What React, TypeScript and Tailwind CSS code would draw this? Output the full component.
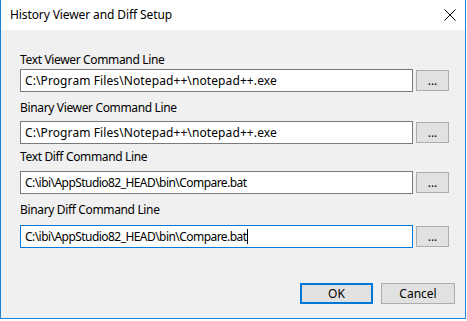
import React from "react";

const font = { fontFamily: '"Noto Sans", "Open Sans", sans-serif' };

function Row({
  label,
  value,
  labelClass,
  inputClass,
  valueClass,
  focused,
}: {
  label: string;
  value: string;
  labelClass: string;
  inputClass: string;
  valueClass: string;
  focused?: boolean;
}) {
  return (
    <>
      <div className={`h-[16px] leading-[16px] text-[12px] tracking-[-0.35px] text-black ${labelClass}`}>{label}</div>
      <div className={`flex items-center gap-[3px] ${inputClass}`}>
        <div
          className={`w-[393px] h-[23px] bg-white border flex items-center pl-[4px] text-[12px] text-black whitespace-nowrap ${
            focused ? "border-[#0078d7]" : "border-[#7a7a7a]"
          }`}
        >
          <span className={valueClass}>{value}</span>
          {focused && <span className="inline-block w-px h-[15px] bg-black" />}
        </div>
        <div className="w-[33px] h-[21px] bg-[#e1e1e1] border border-[#adadad] flex items-center justify-center text-[12px] leading-none text-black">
          ...
        </div>
      </div>
    </>
  );
}

export default function App() {
  return (
    <div className="w-[467px] h-[321px] bg-white" style={font}>
      <div className="w-[466px] h-[319px] border-l border-r border-b border-[#1883d7] flex flex-col">
        <div className="h-[30px] bg-white flex items-center justify-between pl-[9px] pr-[8px]">
          <span className="text-[12px] tracking-[-0.1px] text-black">History Viewer and Diff Setup</span>
          <svg width="12" height="12" viewBox="0 0 12 12" className="mr-[1px]">
            <path d="M0.5 0.5 L11.5 11.5 M11.5 0.5 L0.5 11.5" stroke="#000" strokeWidth="1" fill="none" />
          </svg>
        </div>
        <div className="flex-1 bg-[#f0f0f0] flex flex-col pl-[19px]">
          <Row
            label="Text Viewer Command Line"
            value="C:\Program Files\Notepad++\notepad++.exe"
            labelClass="mt-[22px]"
            inputClass="mt-[1px]"
            valueClass="tracking-[0.1px]"
          />
          <Row
            label="Binary Viewer Command Line"
            value="C:\Program Files\Notepad++\notepad++.exe"
            labelClass="mt-[8px]"
            inputClass="mt-[5px]"
            valueClass="tracking-[0.1px]"
          />
          <Row
            label="Text Diff Command Line"
            value="C:\ibi\AppStudio82_HEAD\bin\Compare.bat"
            labelClass="mt-[5px]"
            inputClass="mt-[6px]"
            valueClass="tracking-[-0.55px]"
          />
          <Row
            label="Binary Diff Command Line"
            value="C:\ibi\AppStudio82_HEAD\bin\Compare.bat"
            labelClass="mt-[8px]"
            inputClass="mt-[7px]"
            valueClass="tracking-[-0.55px]"
            focused
          />
          <div className="mt-auto mb-[14px] flex justify-end gap-[8px] pr-[10px]">
            <div className="w-[73px] h-[21px] bg-[#e1e1e1] border-2 border-[#0078d7] flex items-center justify-center text-[12px] text-black">
              OK
            </div>
            <div className="w-[74px] h-[21px] bg-[#e1e1e1] border border-[#adadad] flex items-center justify-center text-[12px] text-black">
              Cancel
            </div>
          </div>
        </div>
      </div>
    </div>
  );
}
